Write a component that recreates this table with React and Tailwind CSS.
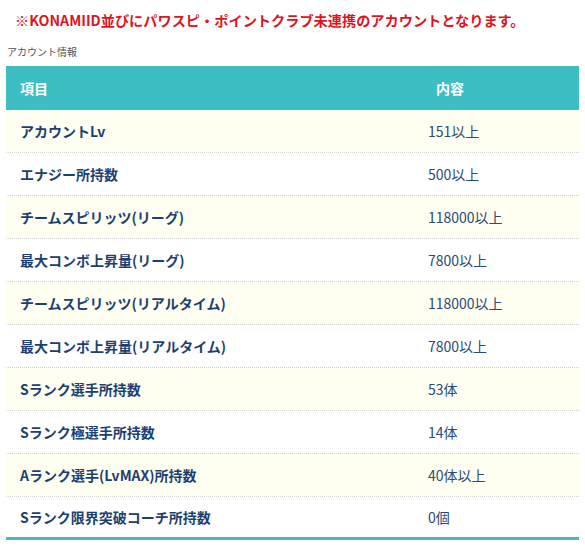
import React from "react";

const rows = [
  ["アカウントLv", "151以上"],
  ["エナジー所持数", "500以上"],
  ["チームスピリッツ(リーグ)", "118000以上"],
  ["最大コンボ上昇量(リーグ)", "7800以上"],
  ["チームスピリッツ(リアルタイム)", "118000以上"],
  ["最大コンボ上昇量(リアルタイム)", "7800以上"],
  ["Sランク選手所持数", "53体"],
  ["Sランク極選手所持数", "14体"],
  ["Aランク選手(LvMAX)所持数", "40体以上"],
  ["Sランク限界突破コーチ所持数", "0個"],
];

export default function App() {
  return (
    <div
      className="w-[585px] h-[549px] bg-white overflow-hidden"
      style={{ fontFamily: '"Noto Sans CJK JP", "Noto Sans", sans-serif' }}
    >
      <div className="pl-[15px] pt-[8px] h-[38px] text-[14.2px] leading-[24px] font-bold text-[#e0141e]">
        ※KONAMIID並びにパワスピ・ポイントクラブ未連携のアカウントとなります。
      </div>
      <div className="pl-[7px] h-[28px] text-[10px] leading-[28px] text-[#555]">
        アカウント情報
      </div>
      <div className="ml-[6px] w-[573px]">
        <div className="flex h-[44px] bg-[#3dbec3] text-white font-bold text-[14px] items-center">
          <div className="w-[415px] pl-[14px]">項目</div>
          <div className="pl-[15px]">内容</div>
        </div>
        {rows.map(([k, v], i) => (
          <div
            key={i}
            className={
              "flex h-[43px] items-center text-[14px] " +
              (i % 2 === 0 ? "bg-[#fefef1] " : "bg-white ") +
              (i < rows.length - 1
                ? "border-b border-dotted border-[#d2d2d2]"
                : "border-b-[3px] border-solid border-[#4bb9bd]")
            }
          >
            <div className="w-[415px] pl-[14px] font-bold text-[#1c3f72]">{k}</div>
            <div className="pl-[7px] text-[#2b4a78]">{v}</div>
          </div>
        ))}
      </div>
    </div>
  );
}
